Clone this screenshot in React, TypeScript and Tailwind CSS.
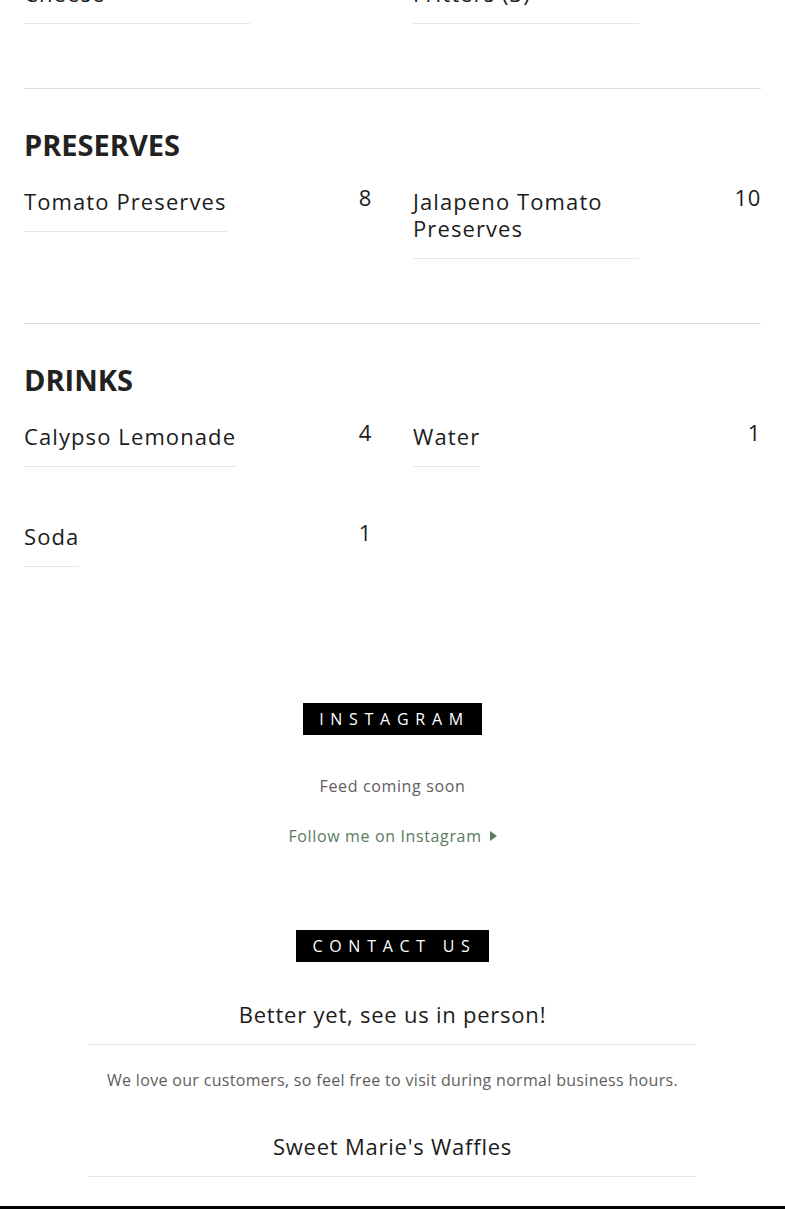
import { ReactNode } from 'react';

type MenuItem = {
  name: string;
  price: string;
};

const sections: { title?: string; items: MenuItem[] }[] = [
  {
    items: [
      { name: 'Fried Pimento Cheese', price: '6' },
      { name: 'Green Tomato Fritters (3)', price: '7' },
    ],
  },
  {
    title: 'PRESERVES',
    items: [
      { name: 'Tomato Preserves', price: '8' },
      { name: 'Jalapeno Tomato Preserves', price: '10' },
    ],
  },
  {
    title: 'DRINKS',
    items: [
      { name: 'Calypso Lemonade', price: '4' },
      { name: 'Water', price: '1' },
      { name: 'Soda', price: '1' },
    ],
  },
];

const MenuRow = ({ item }: { item: MenuItem }) => (
  <div className="flex items-start justify-between">
    <div className="max-w-[65%] border-b border-[#e8e8e8] pb-4 text-[22px] leading-[27px] tracking-[0.05em] text-[#1c1c1c]">
      {item.name}
    </div>
    <div className="text-[22px] leading-[19px] tracking-[0.03em] text-[#1c1c1c]">{item.price}</div>
  </div>
);

const Label = ({ children }: { children: ReactNode }) => (
  <div className="flex justify-center">
    <h2 className="bg-black py-1 pl-4 pr-3 text-[16px] leading-6 tracking-[0.42em] text-white">
      {children}
    </h2>
  </div>
);

export default function App() {
  return (
    <div
      className="min-h-[1209px] overflow-hidden bg-white"
      style={{ fontFamily: '"Open Sans", "Liberation Sans", sans-serif' }}
    >
      <div className="mt-[-47px] px-6">
        {sections.map((section, i) => (
          <div key={i} className={i > 0 ? 'border-t border-[#dcdcdc] pt-[38px]' : ''}>
            {section.title && (
              <h3 className="mb-[25px] text-[29px] font-bold leading-9 text-[#222]">
                {section.title}
              </h3>
            )}
            <div className="grid grid-cols-2 gap-x-[41px] gap-y-14 pb-16">
              {section.items.map((item) => (
                <MenuRow key={item.name} item={item} />
              ))}
            </div>
          </div>
        ))}
      </div>

      <section className="pt-[72px]">
        <Label>INSTAGRAM</Label>
        <p className="mt-[39px] text-center text-[16px] leading-6 tracking-[0.04em] text-[#5e5e5e]">
          Feed coming soon
        </p>
        <a className="mt-[26px] flex items-center justify-center gap-2 text-[16px] leading-6 tracking-[0.04em] text-[#5a7b62]">
          Follow me on Instagram
          <svg width="7" height="10" viewBox="0 0 7 10" className="fill-current">
            <path d="M0 0 L7 5 L0 10 Z" />
          </svg>
        </a>
      </section>

      <section className="pt-[82px]">
        <Label>CONTACT US</Label>
        <div className="mx-auto w-[607px] text-center">
          <div className="mt-[37px] border-b border-[#e6e6e6] pb-[15px] text-[22px] leading-[30px] tracking-[0.035em] text-[#1c1c1c]">
            Better yet, see us in person!
          </div>
          <p className="mt-[23px] text-[16px] leading-6 tracking-[0.02em] text-[#5e5e5e]">
            We love our customers, so feel free to visit during normal business hours.
          </p>
          <div className="mt-[39px] border-b border-[#e6e6e6] pb-[15px] text-[22px] leading-[30px] tracking-[0.035em] text-[#1c1c1c]">
            Sweet Marie's Waffles
          </div>
        </div>
        <div className="mt-[29px] h-10 bg-black" />
      </section>
    </div>
  );
}
